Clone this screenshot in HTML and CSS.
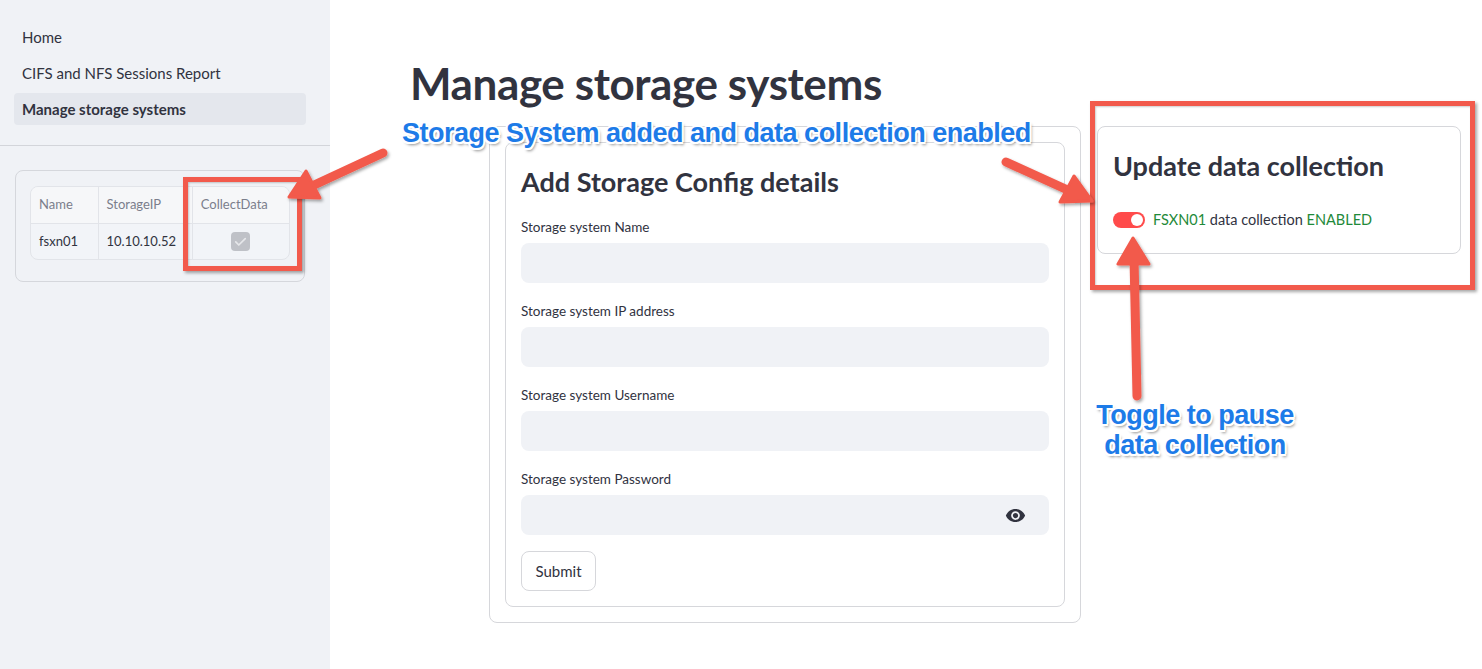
FILE: index.html
```html
<!DOCTYPE html>
<html lang="en">
<head>
<meta charset="utf-8">
<title>Manage storage systems</title>
<link rel="stylesheet" href="styles.css">
</head>
<body>
<div class="app">
  <aside class="sidebar">
    <nav class="nav">
      <a class="nav-item">Home</a>
      <a class="nav-item">CIFS and NFS Sessions Report</a>
      <a class="nav-item active">Manage storage systems</a>
    </nav>
    <hr class="divider">
    <div class="table-card">
      <div class="table">
        <div class="row head">
          <div class="cell c1">Name</div>
          <div class="cell c2">StorageIP</div>
          <div class="cell c3">CollectData</div>
        </div>
        <div class="row">
          <div class="cell c1">fsxn01</div>
          <div class="cell c2">10.10.10.52</div>
          <div class="cell c3 center">
            <span class="chk"><svg viewBox="0 0 20 20" width="19" height="19"><path d="M5 10.5l3.2 3.2L15 7" fill="none" stroke="#e6e7ea" stroke-width="1.8" stroke-linecap="round" stroke-linejoin="round"/></svg></span>
          </div>
        </div>
      </div>
    </div>
  </aside>

  <main class="main">
    <h1 class="title">Manage storage systems</h1>
    <div class="columns">
      <div class="col-empty"></div>
      <div class="form-outer">
        <form class="form-card">
          <h3 class="form-title">Add Storage Config details</h3>
          <div class="field">
            <label class="label">Storage system Name</label>
            <div class="input"></div>
          </div>
          <div class="field">
            <label class="label">Storage system IP address</label>
            <div class="input"></div>
          </div>
          <div class="field">
            <label class="label">Storage system Username</label>
            <div class="input"></div>
          </div>
          <div class="field field-last">
            <label class="label">Storage system Password</label>
            <div class="input pw">
              <svg class="eye" viewBox="0 0 24 24" width="21" height="21"><path fill="#31333f" d="M12 4.5C7 4.5 2.73 7.61 1 12c1.73 4.39 6 7.5 11 7.5s9.27-3.11 11-7.5c-1.73-4.39-6-7.5-11-7.5zM12 17c-2.76 0-5-2.24-5-5s2.24-5 5-5 5 2.24 5 5-2.24 5-5 5zm0-8c-1.66 0-3 1.34-3 3s1.34 3 3 3 3-1.340 3-3-1.34-3-3-3z"/></svg>
            </div>
          </div>
          <div class="btn">Submit</div>
        </form>
      </div>
      <div class="update-card">
        <h3 class="update-title">Update data collection</h3>
        <div class="toggle-row">
          <span class="toggle"><span class="knob"></span></span>
          <span class="toggle-label"><span class="green">FSXN01</span> data collection <span class="green">ENABLED</span></span>
        </div>
      </div>
    </div>
  </main>

  <!-- annotations overlay -->
  <div class="mark mark-left"></div>
  <div class="mark mark-right"></div>
  <div class="note note-top">Storage System added and data collection enabled</div>
  <div class="note note-toggle">Toggle to pause<br>data collection</div>
  <svg class="arrows" width="1482" height="669" viewBox="0 0 1482 669">
    <defs>
      <filter id="sh" x="-20%" y="-20%" width="140%" height="140%">
        <feDropShadow dx="1.5" dy="2" stdDeviation="1.5" flood-color="#000" flood-opacity="0.35"/>
      </filter>
    </defs>
    <g filter="url(#sh)" fill="#f25a4c" stroke="#f25a4c" stroke-linecap="round" stroke-linejoin="round">
      <line x1="383" y1="153" x2="312" y2="186" stroke-width="9"/>
      <polygon points="289,197 306,171 320,198" stroke-width="3"/>
      <line x1="1006" y1="162" x2="1072" y2="192" stroke-width="9"/>
      <polygon points="1092,201 1074,176 1060,202" stroke-width="3"/>
      <line x1="1137" y1="396" x2="1134" y2="258" stroke-width="9"/>
      <polygon points="1133,238 1118,264 1149,264" stroke-width="3"/>
    </g>
  </svg>
</div>
</body>
</html>
```

FILE: styles.css
```css
* { box-sizing: border-box; }
html, body { margin: 0; padding: 0; }
body {
  font-family: "Lato", "Open Sans", sans-serif;
  color: #31333f;
  background: #ffffff;
}
.app {
  position: relative;
  display: flex;
  width: 1482px;
  height: 669px;
  overflow: hidden;
}
.sidebar {
  width: 330px;
  flex: none;
  background: #f0f2f6;
  padding-top: 21px;
}
.nav {
  display: flex;
  flex-direction: column;
  gap: 4px;
  padding: 0 24px 0 14px;
}
.nav-item {
  display: block;
  height: 32px;
  line-height: 33px;
  padding-left: 8px;
  border-radius: 4px;
  font-size: 15px;
  color: #31333f;
}
.nav-item.active {
  background: #e4e7ed;
  font-weight: 700;
}
.divider {
  margin: 20px 0 0;
  border: 0;
  border-top: 1px solid #d3d5da;
}
.table-card {
  margin: 24px 25px 0 15px;
  height: 112px;
  border: 1px solid #d5d7dc;
  border-radius: 8px;
  padding: 15px 14px 0 14px;
}
.table {
  width: 260px;
  border: 1px solid #e2e4e9;
  border-radius: 8px;
  overflow: hidden;
  background: #f2f4f8;
}
.row { display: flex; height: 36px; }
.row + .row { border-top: 1px solid #e2e4e9; }
.cell {
  padding-left: 8px;
  line-height: 35px;
  font-size: 13px;
  color: #31333f;
}
.row.head .cell { color: #7b7e8c; background: #f6f7f9; }
.cell + .cell { border-left: 1px solid #e2e4e9; }
.c1 { width: 67px; }
.c2 { width: 95px; }
.c3 { width: 98px; }
.center { display: flex; align-items: center; justify-content: center; padding-left: 0; }
.chk {
  width: 19px; height: 19px;
  border-radius: 4px;
  background: #bfc1c7;
  display: flex;
}

.main {
  flex: 1;
  padding: 57px 0 0 80px;
}
.title {
  margin: 0;
  font-size: 44px;
  line-height: 52px;
  font-weight: 700;
  color: #31333f;
  letter-spacing: -0.4px;
}
.columns {
  display: grid;
  grid-template-columns: 63px 592px 364px;
  gap: 16px;
  margin-top: 17px;
  align-items: start;
}
.form-outer {
  border: 1px solid #d6d7db;
  border-radius: 8px;
  padding: 15px;
}
.form-card {
  margin: 0;
  border: 1px solid #d6d7db;
  border-radius: 8px;
  padding: 14px 15px 15px;
}
.form-title {
  margin: 0 0 18px;
  padding-top: 8px;
  font-size: 27px;
  line-height: 34px;
  font-weight: 700;
  color: #31333f;
}
.field { margin-bottom: 18px; }
.field.field-last { margin-bottom: 16px; }
.label {
  display: block;
  font-size: 13.5px;
  line-height: 20px;
  margin-bottom: 6px;
  color: #31333f;
}
.input {
  height: 40px;
  border-radius: 8px;
  background: #f0f2f6;
}
.input.pw {
  display: flex;
  align-items: center;
  justify-content: flex-end;
  padding-right: 23px;
}
.btn {
  display: flex;
  align-items: center;
  justify-content: center;
  width: 75px;
  height: 40px;
  border: 1px solid #d6d7db;
  border-radius: 8px;
  font-size: 15px;
  color: #31333f;
  background: #fff;
}
.update-card {
  border: 1px solid #d6d7db;
  border-radius: 8px;
  padding: 21px 15px 18px;
  height: 128px;
}
.update-title {
  margin: 0;
  font-size: 27px;
  line-height: 36px;
  font-weight: 700;
  color: #31333f;
}
.toggle-row {
  display: flex;
  align-items: center;
  gap: 8px;
  margin-top: 27px;
}
.toggle {
  width: 32px; height: 16px;
  border-radius: 8px;
  background: #ff4b4b;
  position: relative;
  flex: none;
}
.knob {
  position: absolute;
  right: 2px; top: 2px;
  width: 12px; height: 12px;
  border-radius: 50%;
  background: #fff;
}
.toggle-label { font-size: 14.5px; color: #31333f; }
.green { color: #1f8a3a; }

/* annotations */
.mark {
  position: absolute;
  border: 5px solid #f25a4c;
  box-shadow: 2px 2px 3px rgba(0,0,0,0.35), inset 1px 1px 2px rgba(0,0,0,0.2);
}
.mark-left { left: 183px; top: 177px; width: 119px; height: 94px; }
.mark-right { left: 1090px; top: 101px; width: 385px; height: 189px; }
.note {
  position: absolute;
  font-family: "Liberation Sans", Arial, sans-serif;
  font-weight: 700;
  color: #1d7be8;
  font-size: 27px;
  letter-spacing: -0.5px;
  text-shadow:
    -2px 0 0 #fff, 2px 0 0 #fff, 0 -2px 0 #fff, 0 2px 0 #fff,
    -1.5px -1.5px 0 #fff, 1.5px -1.5px 0 #fff, -1.5px 1.5px 0 #fff, 1.5px 1.5px 0 #fff,
    2px 3px 3px rgba(0,0,0,0.45);
}
.note-top { left: 402px; top: 117px; line-height: 32px; white-space: nowrap; }
.note-toggle {
  left: 1090px; top: 400px; width: 210px;
  text-align: center; line-height: 30px;
}
.arrows { position: absolute; left: 0; top: 0; pointer-events: none; }
```
